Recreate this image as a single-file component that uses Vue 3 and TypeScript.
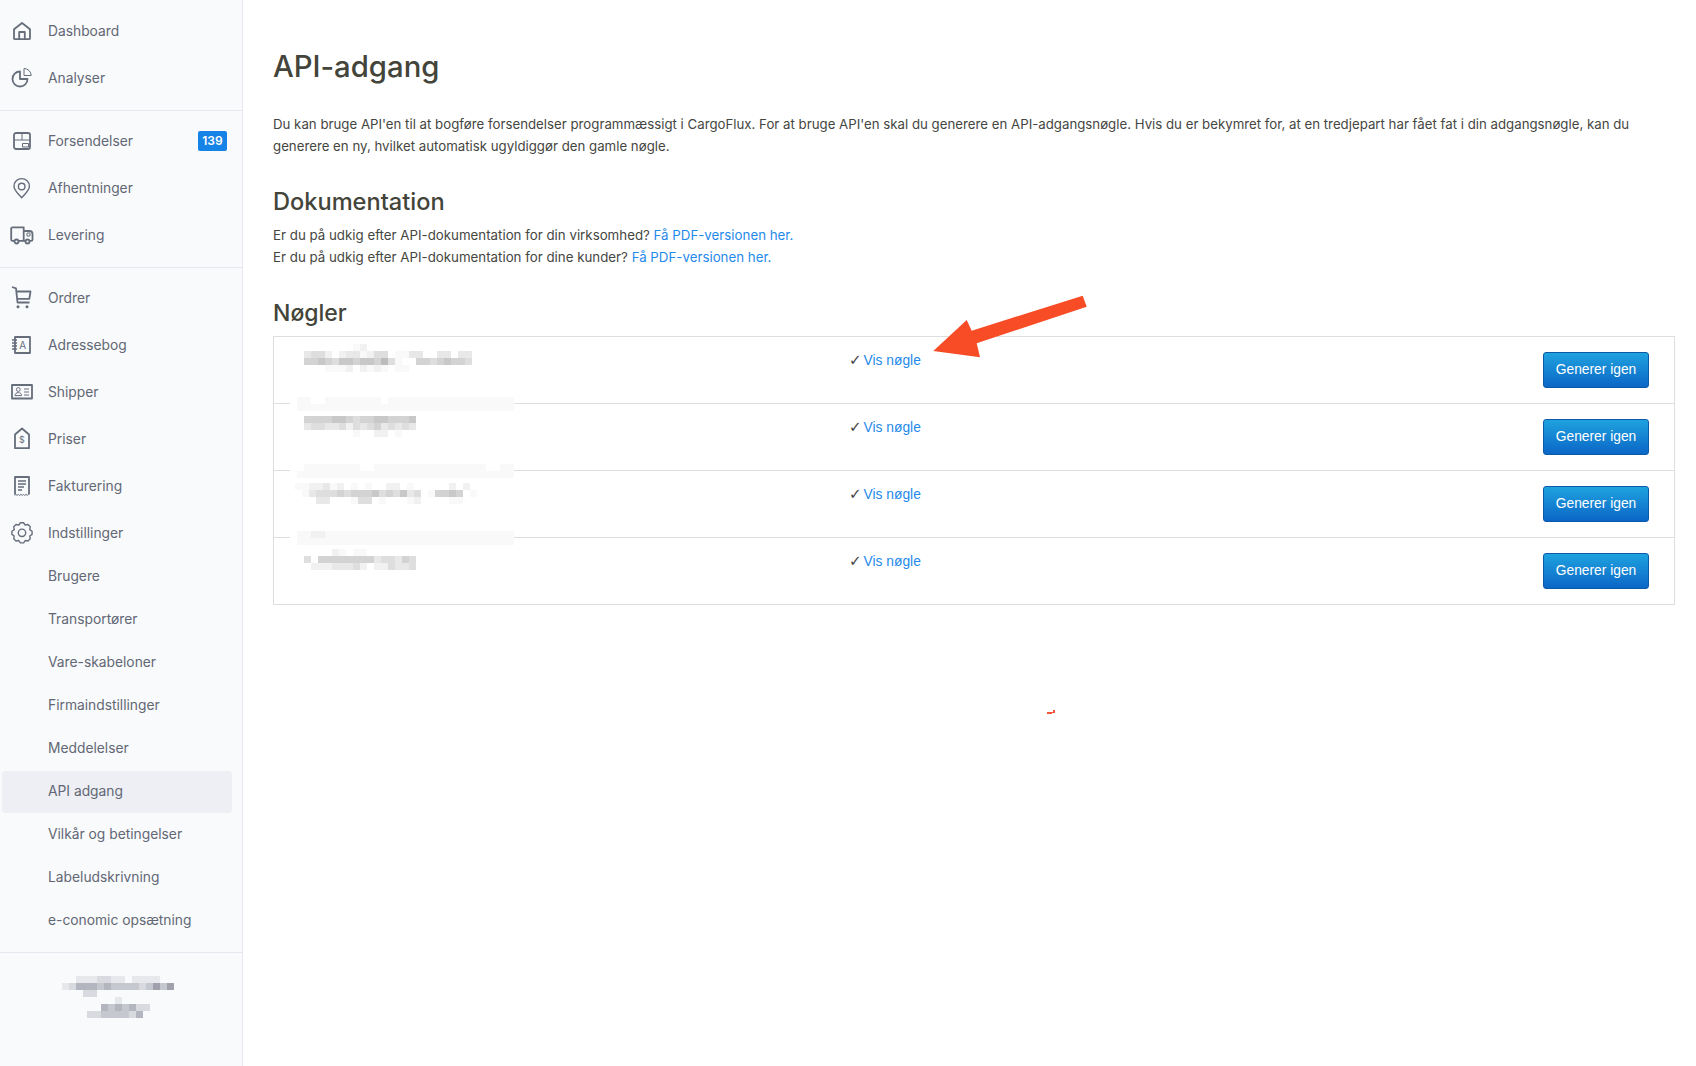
<script setup lang="ts">
const shades: Record<string, string> = {
  '.': 'transparent', '0': '#ffffff', '1': '#f9f9f9', '2': '#f1f1f1', '3': '#e8e8e8', '4': '#dedede',
  '5': '#d3d3d3', '6': '#c8c8c8', '7': '#bcbcbc',
  a: '#e6e8ec', b: '#d8dae0', c: '#c6c8cf', d: '#b4b6bf', e: '#a0a1ac',
}
function cells(row: string): string[] {
  return row.split('').map((c) => shades[c] ?? 'transparent')
}

const gearPath = (() => {
  const cx = 13, cy = 12.8, teeth = 8
  const pts: string[] = []
  for (let i = 0; i < teeth; i++) {
    const a = (i / teeth) * Math.PI * 2
    const step = (Math.PI * 2) / teeth
    const list: [number, number][] = [
      [8.4, a - step * 0.5], [10.2, a - step * 0.2], [10.2, a + step * 0.2],
    ]
    for (const [r, t] of list) {
      pts.push(`${(cx + r * Math.cos(t)).toFixed(2)} ${(cy + r * Math.sin(t)).toFixed(2)}`)
    }
  }
  return 'M' + pts.join(' L') + ' Z'
})()

const topItems = [{ label: 'Dashboard', icon: 'home' }, { label: 'Analyser', icon: 'pie' }]
const shipItems = [
  { label: 'Forsendelser', icon: 'box', badge: '139' },
  { label: 'Afhentninger', icon: 'pin' },
  { label: 'Levering', icon: 'truck' },
]
const mainItems = [
  { label: 'Ordrer', icon: 'cart' },
  { label: 'Adressebog', icon: 'book' },
  { label: 'Shipper', icon: 'card' },
  { label: 'Priser', icon: 'tag' },
  { label: 'Fakturering', icon: 'receipt' },
  { label: 'Indstillinger', icon: 'gear' },
]
const subItems = [
  'Brugere', 'Transportører', 'Vare-skabeloner', 'Firmaindstillinger', 'Meddelelser',
  'API adgang', 'Vilkår og betingelser', 'Labeludskrivning', 'e-conomic opsætning',
]

const keys = [
  { offset: 30, top: 7, smear: ['01100111111110111111111111111111', '01111111111111111111111111111111'],
    rows: ['.......12................', '3442.2331244.1133..33.33.', '55654665665741..55456554.', '...1112.2121.11.........'] },
  { offset: 30, top: 12, smear: ['00111111110011111111111111110011', '01111111111111111111111111111111'],
    rows: ['5555665455665556', '3443342434534343', '.......1..22.1..'] },
  { offset: 21, top: 12, smear: ['01122111111111111111111111111111', '01111111111111111111111111111111'],
    rows: ['1122312.1.1..22.1.....2.2.', '.13444545556454634.15565.1', '...33...144.1...12....11..'] },
  { offset: 30, top: 11, smear: [], rows: ['....21.11.......', '4.55555555344354', '.22233342.224334'] },
]

const footerRows = [
  '..aaabbaa.aaaa..',
  'abdddcdccccbcece',
  '...bb...........',
]
const footerRows2 = ['....a....', '..dcdcdbb', 'bbccccbd.']
</script>

<template>
  <div class="page">
    <aside class="sidebar">
      <nav class="group">
        <a v-for="it in topItems" :key="it.label" class="item">
          <svg class="ico" viewBox="0 0 26 26">
            <template v-if="it.icon === 'home'">
              <path d="M5 20.5V11.2L13 5l8 6.2v9.3a.6.6 0 0 1-.6.6H5.600a.6.6 0 0 1-.6-.6Z" />
              <path d="M10.200 21v-7h5.600v7" />
            </template>
            <template v-else>
              <path d="M11 6.500A7.500 7.500 0 1 0 18.500 14H11Z" />
              <path class="thin" d="M15 3.500v7h7.200A7.200 7.200 0 0 0 15 3.500Z" />
            </template>
          </svg>
          <span>{{ it.label }}</span>
        </a>
      </nav>
      <nav class="group sep">
        <a v-for="it in shipItems" :key="it.label" class="item">
          <svg class="ico" viewBox="0 0 26 26">
            <template v-if="it.icon === 'box'">
              <rect x="5" y="5" width="16" height="16" rx="2" />
              <path class="thin" d="M5 12h16M13 5v7" />
              <rect class="thin" x="13.500" y="15.500" width="6" height="3.500" />
            </template>
            <template v-else-if="it.icon === 'pin'">
              <path class="mid" d="M12.700 22.800C9 18.500 5 15.500 5 11.300a7.700 7.700 0 0 1 15.400 0c0 4.200-4 7.200-7.700 11.500Z" />
              <circle class="mid" cx="12.700" cy="11.500" r="3.300" />
            </template>
            <template v-else>
              <path d="M5 18.800H3.500a1.300 1.300 0 0 1-1.300-1.300V6.600a1.300 1.300 0 0 1 1.300-1.300h11.200v13.500H10" />
              <path d="M14.700 9h5.800a3 3 0 0 1 3 3v5.500a1.300 1.300 0 0 1-1.300 1.300H21M14.700 18.800H16" />
              <circle cx="7.500" cy="19.500" r="2" />
              <circle cx="18.500" cy="19.500" r="2" />
              <path class="thin" d="M18 11h3v3h-3z" />
            </template>
          </svg>
          <span>{{ it.label }}</span>
          <b v-if="it.badge" class="badge">{{ it.badge }}</b>
        </a>
      </nav>
      <nav class="group sep last">
        <a v-for="it in mainItems" :key="it.label" class="item">
          <svg class="ico" viewBox="0 0 26 26">
            <template v-if="it.icon === 'cart'">
              <path d="M3 2l4 1.300L8.500 17.500h12" />
              <path d="M7.500 6.500h14l-1.200 7.300H8.200" />
              <circle class="fill" cx="9" cy="21.800" r="1.500" />
              <circle class="fill" cx="18" cy="21.800" r="1.500" />
            </template>
            <template v-else-if="it.icon === 'book'">
              <rect x="6" y="5" width="15" height="16" />
              <path d="M3 8h5M3 11h5M3 14h5M3 17h5" class="mid" />
              <text x="13.800" y="16.500" class="glyph" font-size="10">A</text>
            </template>
            <template v-else-if="it.icon === 'card'">
              <rect x="3" y="6" width="20" height="13.500" />
              <circle class="thin" cx="9.300" cy="10.500" r="1.900" />
              <path class="thin" d="M6 16.600c0-2 1.500-3 3.300-3s3.300 1 3.300 3ZM15 10h5M15 13h5M15 16h5" />
            </template>
            <template v-else-if="it.icon === 'tag'">
              <path d="M6 22.200V8.500L13 2.500l7 6v13.700Z" />
              <text x="13" y="17" class="glyph" font-size="9">$</text>
            </template>
            <template v-else-if="it.icon === 'receipt'">
              <path d="M6 21.500V4h14v17.500" />
              <path class="thin" d="M5.500 22.300l1.300-.8 1.300.8 1.200-.8 1.300.8 1.300-.8 1.300.8 1.300-.8 1.200.8 1.300-.8 1.300.8 1.300-.8" />
              <path class="mid" d="M9 8h8M9 11h8M9 14h6M9 17h4" />
            </template>
            <template v-else>
              <path class="mid" :d="gearPath" />
              <circle class="mid" cx="13" cy="12.800" r="3.700" />
            </template>
          </svg>
          <span>{{ it.label }}</span>
        </a>
        <div class="subs">
          <a
            v-for="label in subItems"
            :key="label"
            class="subitem"
            :class="{ active: label === 'API adgang' }"
          >{{ label }}</a>
        </div>
      </nav>
      <div class="account">
        <div class="pix">
          <div v-for="(r, i) in footerRows" :key="i" class="pix-row">
            <i v-for="(c, j) in cells(r)" :key="j" :style="{ background: c }"></i>
          </div>
        </div>
        <div class="pix">
          <div v-for="(r, i) in footerRows2" :key="i" class="pix-row">
            <i v-for="(c, j) in cells(r)" :key="j" :style="{ background: c }"></i>
          </div>
        </div>
      </div>
    </aside>

    <main class="content">
      <h1>API-adgang</h1>
      <p class="intro">Du kan bruge API'en til at bogføre forsendelser programmæssigt i CargoFlux. For at bruge API'en skal du generere en API-adgangsnøgle. Hvis du er bekymret for, at en tredjepart har fået fat i din adgangsnøgle, kan du<br />generere en ny, hvilket automatisk ugyldiggør den gamle nøgle.</p>

      <h2 class="doc">Dokumentation</h2>
      <p class="lines">Er du på udkig efter API-dokumentation for din virksomhed? <a>Få PDF-versionen her.</a><br />Er du på udkig efter API-dokumentation for dine kunder? <a>Få PDF-versionen her.</a></p>

      <h2 class="keys-title">Nøgler</h2>
      <div class="keys">
        <div v-for="(k, idx) in keys" :key="idx" class="key-row">
          <div class="key-value pix" :style="{ marginLeft: k.offset + 'px', marginTop: k.top + 'px' }">
            <div v-for="(r, i) in k.rows" :key="i" class="pix-row">
              <i v-for="(c, j) in cells(r)" :key="j" :style="{ background: c }"></i>
            </div>
          </div>
          <div class="key-link"><span class="check">✓</span><a>Vis nøgle</a></div>
          <button class="regen" type="button"><span>Generer igen</span></button>
          <div v-if="k.smear.length" class="smear pix">
            <div v-for="(r, i) in k.smear" :key="i" class="pix-row">
              <i v-for="(c, j) in cells(r)" :key="j" :style="{ background: c }"></i>
            </div>
          </div>
        </div>
      </div>
    </main>

    <svg class="annotation" width="170" height="80" viewBox="925 290 170 80">
      <polygon points="933.300,351 966.700,320 971.700,330.700 1082.700,295.700 1086.700,306.700 976.700,343.300 980,357.300" />
    </svg>
    <svg class="speck" width="9" height="4" viewBox="0 0 9 4">
      <path d="M0 2h6V0h2v3H5v1H0Z" />
    </svg>
  </div>
</template>

<style>
html, body { margin: 0; background: #fff; }
</style>

<style scoped>
.page {
  position: relative;
  display: flex;
  min-height: 1066px;
  font-family: Inter, "Noto Sans", sans-serif;
  overflow: hidden;
}
.sidebar {
  box-sizing: border-box;
  width: 243px;
  flex: none;
  background: #f9fafb;
  border-right: 1px solid #e6e8ee;
  padding-top: 7px;
  color: #626775;
  font-size: 13.8px;
}
.group { padding-bottom: 9px; }
.sep { border-top: 1px solid #e4e7ee; padding-top: 6px; }
.item {
  display: flex;
  align-items: center;
  height: 47px;
  padding: 0 15px 0 9px;
}
.ico {
  width: 26px;
  height: 26px;
  flex: none;
  margin-right: 13px;
  fill: none;
  stroke: #666e7c;
  stroke-width: 1.800;
  stroke-linejoin: round;
}
.ico .thin { stroke-width: 1; }
.ico .mid { stroke-width: 1.400; }
.ico .fill { fill: #666e7c; stroke: none; }
.ico .glyph {
  fill: #666e7c;
  stroke: none;
  text-anchor: middle;
  font-family: Inter, sans-serif;
}
.badge {
  margin-left: auto;
  box-sizing: border-box;
  width: 29px;
  height: 20px;
  border-radius: 2px;
  background: #1683e6;
  color: #fff;
  font-size: 12px;
  font-weight: 600;
  line-height: 20px;
  text-align: center;
}
.subitem {
  display: block;
  box-sizing: border-box;
  height: 42px;
  line-height: 40px;
  margin: 0 10px 1px 2px;
  padding-left: 46px;
  border-radius: 4px;
}
.subitem.active { background: #edeff4; }
.account {
  border-top: 1px solid #e4e7ee;
  padding-top: 23px;
  display: flex;
  flex-direction: column;
  align-items: center;
  padding-right: 6px;
}
.pix { display: flex; flex-direction: column; }
.pix-row { display: flex; height: 7px; }
.pix-row i { display: block; width: 7px; height: 7px; flex: none; }
.content {
  flex: 1;
  min-width: 0;
  padding: 0 21px 0 30px;
  color: #43443a;
}
h1 {
  margin: 48px 0 0;
  font-size: 29.3px;
  line-height: 37px;
  font-weight: 500;
}
.intro {
  margin: 28px 0 0;
  font-size: 13.25px;
  line-height: 22px;
  color: #45463f;
}
h2 {
  margin: 0;
  font-size: 23px;
  line-height: 30px;
  font-weight: 500;
}
.doc { margin-top: 30px; font-size: 23.6px; }
.lines {
  margin: 7px 0 0;
  font-size: 13.3px;
  line-height: 22px;
  color: #45463f;
}
.lines a { color: #1f8aea; }
.keys-title { margin-top: 30px; }
.keys {
  margin-top: 8px;
  border: 1px solid #dedede;
}
.key-row {
  position: relative;
  display: grid;
  grid-template-columns: 575px 1fr auto;
  align-items: start;
  height: 66px;
  padding-right: 25px;
  border-bottom: 1px solid #dedede;
  font-family: "Liberation Sans", Arial, sans-serif;
}
.key-row:last-child { border-bottom: 0; }
.key-link {
  margin-top: 15px;
  font-size: 13.8px;
  line-height: 18px;
  color: #444;
}
.check {
  font-family: "DejaVu Sans", sans-serif;
  font-size: 15px;
  line-height: 14px;
  margin-right: 2px;
}
.key-link a { color: #1f8aea; }
.regen {
  box-sizing: border-box;
  margin-top: 15px;
  width: 106px;
  height: 36px;
  border: 1px solid #0a5aa8;
  border-radius: 3px;
  background: linear-gradient(#1fa2df, #0b66c6);
  color: #fff;
  font-family: "Liberation Sans", Arial, sans-serif;
  font-size: 13.8px;
  padding: 0 0 2px;
}
.smear {
  position: absolute;
  left: 16px;
  bottom: -8px;
  width: 224px;
}
.annotation {
  position: absolute;
  left: 925px;
  top: 290px;
}
.annotation polygon { fill: #f74c25; }
.speck {
  position: absolute;
  left: 1047px;
  top: 710px;
}
.speck path { fill: #f4543a; }
</style>
